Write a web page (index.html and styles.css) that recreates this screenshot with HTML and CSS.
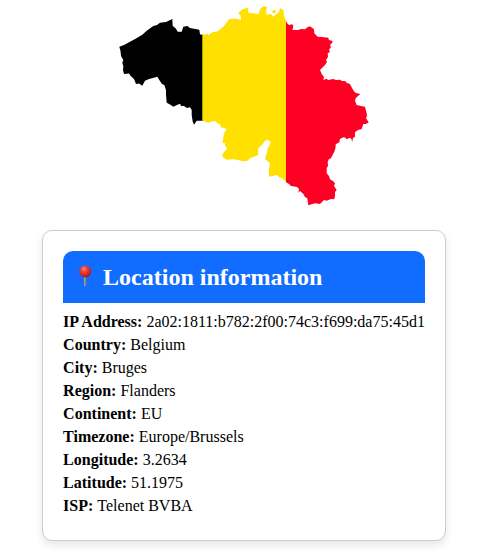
FILE: index.html
```html
<!DOCTYPE html>
<html lang="en">
<head>
<meta charset="utf-8">
<meta name="viewport" content="width=device-width, initial-scale=1">
<title>Location information</title>
<link rel="stylesheet" href="styles.css">
</head>
<body>
<main class="page">
  <svg class="map" viewBox="119 0 250 210" role="img" aria-label="Belgium">
    <clipPath id="outline">
      <path d="M119.3 46.7L124 45L130 41.7L136 38.5L142.3 34.7L147 30.5L153.3 26L157 25L160 22.7L166 22L172.3 19L172.7 25.7L176 28.7L177.7 31.7L181.7 31.7L183.3 26.7L187.3 26L190 28L199.3 29.7L200 34.3L202.3 35L203.5 34L205 35L207 33.5L209 35L212.3 32.3L217.7 31.3L223.3 26.7L229.3 19L235 18.7L237 19L241 20L240.7 16L238.3 12.7L243.3 9L248.3 7.7L248.3 12.7L252.3 13.3L258.3 14L260.7 8.3L264 6L267 7.3L265.7 12L267 13.3L265 15L271 14L273.3 16.7L276.7 14L279 12L280 8.3L283.3 10L284 16L286 21L287.7 24L289 25L292.3 24.3L293.3 26L292.5 30L298 30L301 29L305 29.3L307 27.5L310 26.3L314 29.3L314.3 33.3L317.7 36.7L322 37L328.3 37.7L329 40L332.7 41L332 43L330 45L331 47L329 50L330 52L327.7 53.3L328 57L326 60L327 62L325 65L323 67L320 70L321.7 74L324 77L323.3 80L326.7 78.7L328 80L333.3 79L336 80L340 79.7L342 81L345 81L347 83L350 84L352 88L354.3 91.7L356 93L360.3 94L358 96L355.7 98.3L355 101L356.7 105L361 106L365 106.7L366.7 113.3L367 116L366 118.3L368.7 122.3L366 124L363.3 124L361.7 129L358 130L355 132.3L355 136.7L353 138L352.3 141.7L351 138.3L349 138L346.7 139.3L345 137.5L343.3 137.3L340 139L339.3 142.3L335.7 144.3L335.5 148L334.3 151.7L333 154L331 158.3L329 159L327.7 161.7L328 166L326.7 168L326.7 173.3L329 176L330 179.3L333 181L335 183.3L334 186L336.7 190L335 192L335 196L334.3 199.3L331 199L326.7 200.7L324 200L320 204L315 203.3L308.3 205.3L307.3 198.3L305 197L303.3 194L300 191L298.3 192.7L299 189L297 187L291 186L289 184L286 182.3L285 180.7L282 178L279 177L276.7 175L273 176L269 176.7L269 170L270 163.3L265 159L266.7 153.3L267.7 148.3L270.3 144L270.3 141L266.7 139.7L264 142L262.7 144.3L258.3 148.3L258.3 155L250 158.3L247 161L243.3 161.3L238 160L233.3 159.3L226.7 159.7L222.7 157.3L222.5 154L224 152.3L227.3 148.3L225 146L225 143.3L222.3 142.7L223 139L224 133.3L226.7 129.3L223 127.5L221 127.7L220 124.3L217 123L215 121L212 121.5L208.3 122.7L205 121.5L202.3 120.7L196.7 120.7L194 124.7L192.7 121.7L191.7 115L191.7 110L190 107.3L187 108L184 106L181 106L180 103.7L177 105L173.3 106.7L170 104.5L166.7 102.7L166 95L166 90L164.3 85L162 84L159.3 80L157.3 76.7L153 78L149 79L145 80.7L142.3 85.7L139 83.5L136 84L134 79L130.7 76L129 73.5L124 74L123 70L123.3 66L122.3 63L123.3 60L121 56L120.5 51Z M272.5 10.5L275 10L276 12L274 13.5L272.5 12.5Z"/>
    </clipPath>
    <g clip-path="url(#outline)">
      <rect x="119" y="0" width="84" height="210" fill="#000"/>
      <rect x="202.3" y="0" width="84" height="210" fill="#ffe000"/>
      <rect x="286" y="0" width="83" height="210" fill="#ff0025"/>
    </g>
  </svg>

  <section class="card">
    <h1 class="card-title">
      <svg class="pin" viewBox="0 0 24 24" aria-hidden="true">
        <defs>
          <radialGradient id="ball" cx="0.4" cy="0.3" r="0.7">
            <stop offset="0" stop-color="#ff9a8c"/>
            <stop offset="0.3" stop-color="#e8493f"/>
            <stop offset="0.75" stop-color="#cf2522"/>
            <stop offset="1" stop-color="#9c1c2c"/>
          </radialGradient>
          <linearGradient id="needle">
            <stop offset="0" stop-color="#a3afbf"/>
            <stop offset="1" stop-color="#5c6678"/>
          </linearGradient>
        </defs>
        <path d="M10.9 12h2.8l-.3 9.2h-2.2z" fill="url(#needle)"/>
        <circle cx="12.2" cy="6.4" r="6" fill="url(#ball)"/>
      </svg>
      Location information
    </h1>
    <dl class="details">
      <div class="row"><dt>IP Address:</dt> <dd>2a02:1811:b782:2f00:74c3:f699:da75:45d1</dd></div>
      <div class="row"><dt>Country:</dt> <dd>Belgium</dd></div>
      <div class="row"><dt>City:</dt> <dd>Bruges</dd></div>
      <div class="row"><dt>Region:</dt> <dd>Flanders</dd></div>
      <div class="row"><dt>Continent:</dt> <dd>EU</dd></div>
      <div class="row"><dt>Timezone:</dt> <dd>Europe/Brussels</dd></div>
      <div class="row"><dt>Longitude:</dt> <dd>3.2634</dd></div>
      <div class="row"><dt>Latitude:</dt> <dd>51.1975</dd></div>
      <div class="row"><dt>ISP:</dt> <dd>Telenet BVBA</dd></div>
    </dl>
  </section>
</main>
</body>
</html>
```

FILE: styles.css
```css
* {
  box-sizing: border-box;
}

body {
  margin: 0;
  background: #fff;
  color: #000;
  font-family: "Liberation Serif", "Times New Roman", Times, serif;
  font-size: 16px;
  line-height: 18px;
}

.page {
  display: flex;
  flex-direction: column;
  align-items: center;
  gap: 20px;
  min-height: 100vh;
  padding: 0 0 10px 8px;
}

.map {
  display: block;
  width: 250px;
  height: auto;
}

.card {
  padding: 20px;
  border: 1px solid #ccc;
  border-radius: 10px;
  background: #fff;
  box-shadow: 0 4px 8px rgba(0, 0, 0, 0.1);
}

.card-title {
  display: flex;
  align-items: center;
  gap: 6px;
  margin: 0 0 10px;
  padding: 10px;
  border-radius: 10px 10px 0 0;
  background: #116dff;
  color: #fff;
  font-size: 24px;
  line-height: 32px;
}

.pin {
  width: 24px;
  height: 24px;
}

.details {
  margin: 0;
}

.row {
  margin-bottom: 5px;
}

.row dt,
.row dd {
  display: inline;
  margin: 0;
}

.row dt {
  font-weight: bold;
}
```
